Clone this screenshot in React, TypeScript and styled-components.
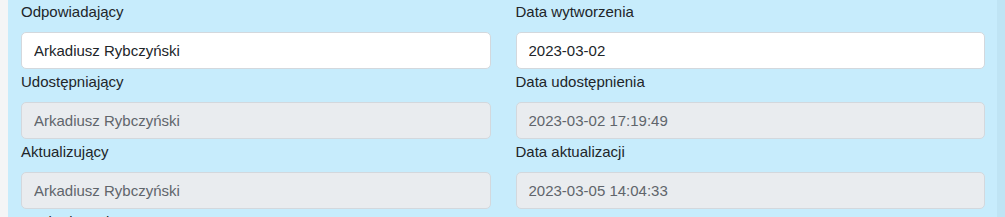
import React from "react";
import styled, { createGlobalStyle } from "styled-components";

const GlobalStyle = createGlobalStyle`
  html, body {
    margin: 0;
    padding: 0;
    background: #f4f5f6;
    overflow: hidden;
  }
  body {
    font-family: "Liberation Sans", Arial, sans-serif;
    color: #212529;
  }
`;

const Page = styled.div`
  display: flex;
  height: 217px;
  padding-left: 8px;
`;

const Panel = styled.div`
  flex: 1;
  background: #c7ecfc;
  padding: 0 12px 0 13px;
  border-right: 8px solid #bfe4f4;
`;

const Grid = styled.div`
  display: grid;
  grid-template-columns: 1fr 1fr;
  column-gap: 25px;
`;

const Field = styled.div`
  display: flex;
  flex-direction: column;
`;

const Label = styled.label`
  font-size: 15px;
  line-height: 24px;
  margin-bottom: 8px;
  color: #212529;
`;

const Input = styled.input<{ $locked?: boolean }>`
  box-sizing: border-box;
  height: 37px;
  margin-bottom: 1px;
  padding: 0 12px;
  font-family: inherit;
  font-size: 15px;
  border: 1px solid #d3d8dd;
  border-radius: 5px;
  background: ${(p) => (p.$locked ? "#e9ecef" : "#ffffff")};
  color: ${(p) => (p.$locked ? "#60656b" : "#212529")};
  outline: none;
`;

interface Item {
  label: string;
  value: string;
  locked?: boolean;
}

const fields: Item[] = [
  { label: "Odpowiadający", value: "Arkadiusz Rybczyński" },
  { label: "Data wytworzenia", value: "2023-03-02" },
  { label: "Udostępniający", value: "Arkadiusz Rybczyński", locked: true },
  { label: "Data udostępnienia", value: "2023-03-02 17:19:49", locked: true },
  { label: "Aktualizujący", value: "Arkadiusz Rybczyński", locked: true },
  { label: "Data aktualizacji", value: "2023-03-05 14:04:33", locked: true },
  { label: "Osoba kontaktowa", value: "" },
];

const App = () => {
  return (
    <>
      <GlobalStyle />
      <Page>
        <Panel>
          <Grid>
            {fields.map((f) => (
              <Field key={f.label}>
                <Label>{f.label}</Label>
                <Input
                  $locked={f.locked}
                  readOnly={f.locked}
                  defaultValue={f.value}
                />
              </Field>
            ))}
          </Grid>
        </Panel>
      </Page>
    </>
  );
};

export default App;
